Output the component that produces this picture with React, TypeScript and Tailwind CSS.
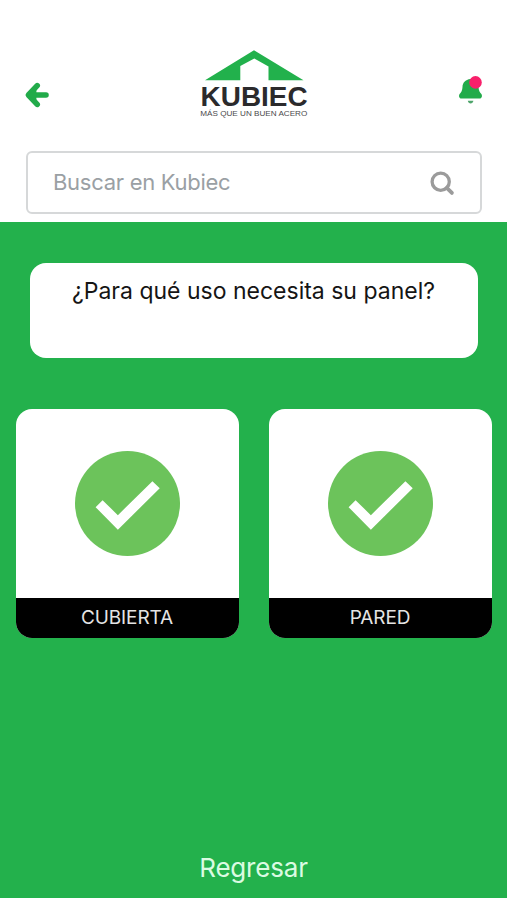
const options = ["CUBIERTA", "PARED"];

function Logo() {
  return (
    <svg width="110" height="72" viewBox="0 0 110 72" role="img" aria-label="Kubiec">
      <path
        d="M54 2.2L103.5 32.3H68.5V18.5L54.3 10.5L40.3 18V32.3H5z"
        fill="#22b14c"
      />
      <text
        x="0.6"
        y="58.2"
        textLength="107"
        lengthAdjust="spacingAndGlyphs"
        className="font-['Liberation_Sans',sans-serif] text-[27px] font-bold"
        fill="#2b2a2c"
      >
        KUBIEC
      </text>
      <text
        x="0.3"
        y="67.8"
        textLength="107"
        lengthAdjust="spacingAndGlyphs"
        className="font-['Liberation_Sans',sans-serif] text-[8px]"
        fill="#4a494b"
      >
        MÁS QUE UN BUEN ACERO
      </text>
    </svg>
  );
}

function BackIcon() {
  return (
    <svg width="26" height="28" viewBox="0 0 26 28" fill="none" stroke="#22ab4a">
      <path
        d="M13.2 4.6L4.4 14L13.2 23.4M6 14H22"
        strokeWidth="5.6"
        strokeLinecap="round"
        strokeLinejoin="round"
      />
      <path d="M4 14L12.4 6.4V21.6z" fill="#22ab4a" stroke="none" />
    </svg>
  );
}

function BellIcon() {
  return (
    <svg width="26" height="30" viewBox="0 0 26 30">
      <path
        d="M12.5 4C7.2 4.5 4.6 8 4.5 12C4.4 15.5 3.2 17.2 1.6 19C0.4 20.8 1.2 23.5 3.2 23.5H21.8C23.8 23.5 24.6 20.8 23.4 19C21.8 17.2 20.6 15.5 20.5 12C20.4 8 17.8 4.5 12.5 4z"
        fill="#22ab4a"
      />
      <path d="M9.8 25.7H15.4C15 27.4 14 28.4 12.6 28.4S10.2 27.4 9.8 25.7z" fill="#4fa56c" />
      <circle cx="17.5" cy="7.4" r="6.3" fill="#f8206b" />
    </svg>
  );
}

function SearchIcon() {
  return (
    <svg width="26" height="26" viewBox="0 0 26 26" fill="none" stroke="#9b9b9b">
      <circle cx="11.7" cy="11.7" r="8.6" strokeWidth="3.3" />
      <path d="M17.8 17.8L22.9 22.9" strokeWidth="3.8" strokeLinecap="round" />
    </svg>
  );
}

function CheckIcon() {
  return (
    <svg width="105" height="105" viewBox="0 0 316 316">
      <circle cx="158" cy="158" r="158" fill="#6cc35b" />
      <path d="M62 169L83 148L129 193L233 91L255 112L129 237z" fill="#fff" />
    </svg>
  );
}

export default function App() {
  return (
    <div className="flex h-[900px] w-[507px] flex-col overflow-hidden bg-white pb-[2px] font-[Inter,sans-serif]">
      <header className="h-[222px] shrink-0 px-[26px] pt-12">
        <div className="flex h-[103px] justify-between">
          <button type="button" aria-label="Atrás" className="-ml-[2px] mt-[33px] self-start">
            <BackIcon />
          </button>
          <div className="ml-[1px]">
            <Logo />
          </div>
          <button type="button" aria-label="Notificaciones" className="-mr-[3px] mt-[27px] self-start">
            <BellIcon />
          </button>
        </div>
        <label className="flex h-[63px] w-[456px] items-center justify-between rounded-md border-2 border-[#d6d8d9] px-[25px]">
          <span className="text-[22px] tracking-[-0.28px] text-[#9aa0a4]">Buscar en Kubiec</span>
          <SearchIcon />
        </label>
      </header>

      <main className="flex flex-1 flex-col items-center bg-[#23b14c] pt-[41px]">
        <h1 className="h-[95px] w-[448px] rounded-2xl bg-white pt-3 text-center text-[23px] leading-8 text-[#151515]">
          ¿Para qué uso necesita su panel?
        </h1>
        <div className="mt-[50.5px] flex gap-[30px]">
          {options.map((option) => (
            <button
              key={option}
              type="button"
              className="flex h-[229.5px] w-[223px] flex-col overflow-hidden rounded-2xl bg-white"
            >
              <span className="flex h-[189.5px] w-full items-center justify-center">
                <CheckIcon />
              </span>
              <span className="flex w-full flex-1 items-center justify-center bg-black text-[19px] tracking-[-0.1px] text-[#e4e4e4]">
                {option}
              </span>
            </button>
          ))}
        </div>
        <button type="button" className="mb-[12px] mt-auto text-[26px] leading-9 tracking-[-0.2px] text-[#dbfbe2]">
          Regresar
        </button>
      </main>
    </div>
  );
}
